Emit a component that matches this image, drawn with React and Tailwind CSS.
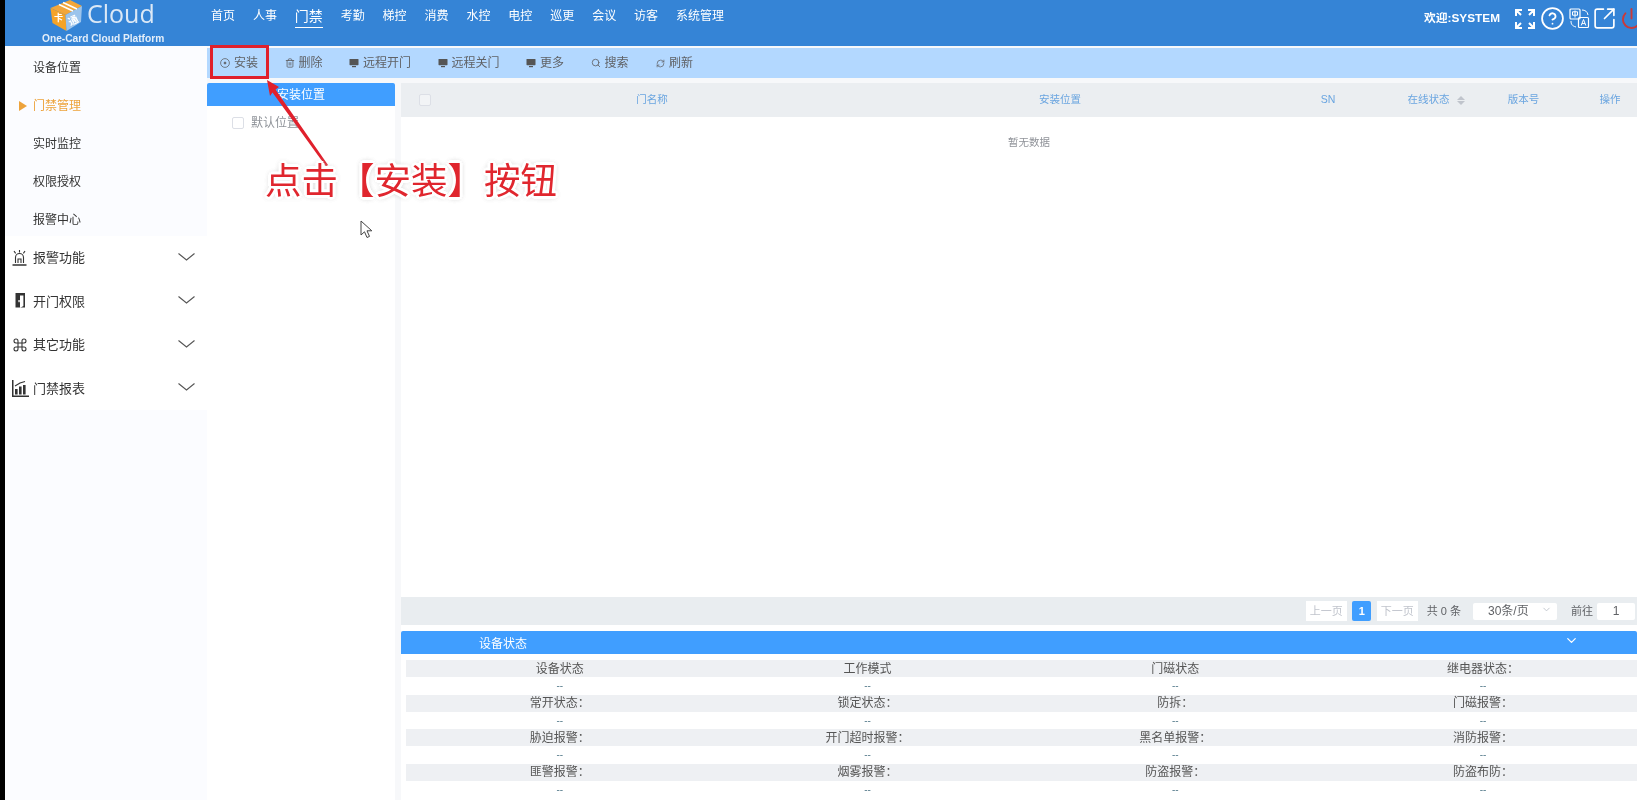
import React from "react";
import { ChevronDown, CircleHelp, Power, SquareArrowOutUpRight, Trash2, Search, RefreshCw, Command } from "lucide-react";

const font = "font-['Liberation_Sans','Noto_Sans_CJK_SC',sans-serif]";
const navItems = ["首页", "人事", "门禁", "考勤", "梯控", "消费", "水控", "电控", "巡更", "会议", "访客", "系统管理"];
const subItems = ["设备位置", "门禁管理", "实时监控", "权限授权", "报警中心"];
const statusRows = [
  ["设备状态", "工作模式", "门磁状态", "继电器状态："],
  ["常开状态：", "锁定状态：", "防拆：", "门磁报警："],
  ["胁迫报警：", "开门超时报警：", "黑名单报警：", "消防报警："],
  ["匪警报警：", "烟雾报警：", "防盗报警：", "防盗布防："],
];

function Logo() {
  return (
    <svg width="32" height="31" viewBox="0 0 32 31" className="shrink-0">
      <path d="M0.5 8 L20 0 L32 6 L15.5 15 Z" fill="#f2a63a" />
      <path d="M0.5 8 L15.5 15 L16.5 31 L2.5 23 Z" fill="#f5a327" />
      <path d="M15.5 15 L32 6 L31 22 L16.5 31 Z" fill="#9cc4ec" />
      <path d="M9 4.5 L23 11 M13 2.5 L27 9" stroke="#fff" strokeWidth="1.6" />
      <text x="4" y="21" fontSize="9" fill="#fff" fontWeight="700" fontFamily="Noto Sans CJK SC, sans-serif">卡</text>
      <text x="18" y="24" fontSize="10" fill="#fff" fontWeight="700" fontFamily="Noto Sans CJK SC, sans-serif" transform="rotate(-25 23 20)">通</text>
    </svg>
  );
}

function FullIcon() {
  return (
    <svg width="20" height="20" viewBox="0 0 20 20" fill="none" stroke="#fff" strokeWidth="2" className="shrink-0">
      <path d="M1 7V1h6M1 1l5 5M13 1h6v6M19 1l-5 5M1 13v6h6M1 19l5-5M19 13v6h-6M19 19l-5-5" />
    </svg>
  );
}

function TransIcon() {
  return (
    <svg width="21" height="21" viewBox="0 0 21 21" fill="none" stroke="#fff" strokeWidth="1.2" className="shrink-0">
      <rect x="1" y="1" width="10" height="10" rx="1" />
      <path d="M3.5 3.8h5v3.4h-5zM6 2.5v7" strokeWidth="1" />
      <rect x="9.5" y="9.5" width="10" height="10" rx="1" />
      <path d="M12.2 17.5l2.3-6 2.3 6M13 15.6h3" strokeWidth="1" />
      <path d="M13 2c3 0 5.5 1.5 6 5M2 13c0 3 1 5 5 6" strokeWidth="1" />
    </svg>
  );
}

function AlarmIcon() {
  return (
    <svg width="15" height="16" viewBox="0 0 15 16" fill="none" stroke="#333" strokeWidth="1.1">
      <path d="M3.5 13V7.5a4 4 0 0 1 8 0V13" />
      <path d="M6 13V9h3v4" />
      <path d="M0.5 15h14" strokeWidth="1.5" />
      <path d="M2 1l1.6 2.4M7.5 0v2.6M13 1l-1.6 2.4" />
    </svg>
  );
}

function DoorIcon() {
  return (
    <svg width="11" height="16" viewBox="0 0 11 16">
      <path d="M0.5 0h9.5v14.5H0.5z" fill="#333" />
      <path d="M5 2.5h3.4V13L5 15z" fill="#fff" />
      <rect x="3.4" y="7" width="1.3" height="2.2" fill="#fff" />
    </svg>
  );
}

function ChartIcon() {
  return (
    <svg width="17" height="17" viewBox="0 0 17 17" fill="#333">
      <path d="M0 0h1.5v15.5H17V17H0z" />
      <rect x="3" y="9" width="2.6" height="5.5" />
      <rect x="7" y="6.5" width="2.6" height="8" />
      <rect x="11" y="5" width="2.6" height="9.5" />
      <path d="M3 6l5-3 5-1.5" stroke="#333" strokeWidth="1.2" fill="none" />
    </svg>
  );
}

function SectionChevron() {
  return (
    <svg width="17" height="8" viewBox="0 0 17 8" fill="none" stroke="#555" strokeWidth="1.1">
      <path d="M0.5 0.5 L8.5 7 L16.5 0.5" />
    </svg>
  );
}

function ToolItem({ icon, label }) {
  return (
    <div className="flex items-center gap-[4px] text-xs text-[#606266]">
      <span className="flex w-[10px] justify-center">{icon}</span>
      <span>{label}</span>
    </div>
  );
}

function CircleDotIcon() {
  return (
    <svg width="10" height="10" viewBox="0 0 10 10" fill="none" stroke="#606266" strokeWidth="0.8">
      <circle cx="5" cy="5" r="4.4" />
      <circle cx="5" cy="5" r="1" fill="#606266" />
    </svg>
  );
}

function ScreenIcon() {
  return (
    <svg width="10" height="10" viewBox="0 0 10 10" fill="#555">
      <rect x="0.5" y="1" width="9" height="6.2" rx="0.6" />
      <rect x="3" y="8" width="4" height="1.2" />
    </svg>
  );
}

export default function App() {
  return (
    <div className={`relative flex h-[800px] w-[1637px] overflow-hidden bg-white blur-[0.4px] ${font}`}>
      <div className="w-[5px] shrink-0 bg-black" />
      <div className="flex min-w-0 flex-1 flex-col">
        <header className="flex h-[46px] shrink-0 items-start bg-[#3584d6] text-white">
          <div className="flex h-[46px] w-[206px] shrink-0 flex-col items-start">
            <div className="ml-[45px] flex h-[32px] items-start gap-[5px]">
              <Logo />
              <span className="font-['Open_Sans',sans-serif] text-[25px] font-normal leading-[27px] text-[#dbe8f6]">Cloud</span>
            </div>
            <span className="ml-[37px] mt-[1px] whitespace-nowrap text-[10.2px] font-bold leading-[12px] text-[#e4eef9]">One-Card Cloud Platform</span>
          </div>
          <nav className="flex h-[32px] items-center gap-[17.9px] text-xs">
            {navItems.map((n) =>
              n === "门禁" ? (
                <span key={n} className="mt-[1px] border-b border-white pb-[1px] text-sm leading-[20px]">{n}</span>
              ) : (
                <span key={n} className="whitespace-nowrap">{n}</span>
              )
            )}
          </nav>
          <div className="ml-auto mr-[-6px] flex h-[37px] items-center">
            <span className="mr-[15px] whitespace-nowrap text-[11.8px] font-bold">欢迎:SYSTEM</span>
            <FullIcon />
            <CircleHelp size={25} strokeWidth={1.7} className="ml-[5px] shrink-0" />
            <span className="ml-[4px]"><TransIcon /></span>
            <SquareArrowOutUpRight size={25} strokeWidth={1.6} className="ml-[2px] shrink-0" />
            <Power size={23} strokeWidth={2} color="#c93a3a" className="ml-[3px] shrink-0" />
          </div>
        </header>

        <div className="flex min-h-0 flex-1">
          <aside className="flex w-[202px] shrink-0 flex-col bg-[#fbfcff]">
            <div className="h-[190px] shrink-0 pt-[3px] text-xs text-[#333]">
              {subItems.map((s) => (
                <div key={s} className={`relative flex h-[38px] items-center pl-[28px] ${s === "门禁管理" ? "text-[#eda33c]" : ""}`}>
                  {s === "门禁管理" && <span className="absolute left-[14px] h-0 w-0 border-y-[5px] border-l-[8px] border-y-transparent border-l-[#eda33c]" />}
                  {s}
                </div>
              ))}
            </div>
            {[
              [<AlarmIcon />, "报警功能", ""],
              [<DoorIcon />, "开门权限", "pl-[3px]"],
              [<Command size={16} strokeWidth={1.6} color="#333" />, "其它功能", ""],
              [<ChartIcon />, "门禁报表", ""],
            ].map(([icon, t, p]) => (
              <div key={t} className="flex h-[43.5px] shrink-0 items-center bg-white pl-[7px] pr-[12px] text-[13px] text-[#333]">
                <span className={`flex w-[21px] shrink-0 justify-start ${p}`}>{icon}</span>
                <span>{t}</span>
                <span className="ml-auto mb-[2px]"><SectionChevron /></span>
              </div>
            ))}
          </aside>

          <main className="flex min-w-0 flex-1 flex-col bg-[#f7f8fa] pt-[2px]">
            <div className="flex h-[30px] shrink-0 items-center gap-[26.5px] bg-[#b3d8ff] pl-[13px]">
              <ToolItem icon={<CircleDotIcon />} label="安装" />
              <ToolItem icon={<Trash2 size={10} color="#606266" />} label="删除" />
              <ToolItem icon={<ScreenIcon />} label="远程开门" />
              <ToolItem icon={<ScreenIcon />} label="远程关门" />
              <ToolItem icon={<ScreenIcon />} label="更多" />
              <ToolItem icon={<Search size={10} color="#606266" />} label="搜索" />
              <ToolItem icon={<RefreshCw size={9} color="#606266" />} label="刷新" />
            </div>

            <div className="flex min-h-0 flex-1 gap-[6px] pt-[5px]">
              <section className="flex w-[188px] shrink-0 flex-col bg-white">
                <div className="flex h-[23px] items-center justify-center rounded-t-[2px] bg-[#409eff] pt-[1px] text-xs text-white">安装位置</div>
                <div className="flex items-center gap-[7px] pl-[25px] pt-[9px] text-xs text-[#8f9399]">
                  <span className="h-[12px] w-[12px] rounded-[2px] border border-[#dcdfe6] bg-white" />
                  默认位置
                </div>
              </section>

              <section className="flex min-w-0 flex-1 flex-col overflow-hidden">
                <div className="flex min-h-0 flex-1 flex-col bg-white">
                  <div className="grid h-[34px] w-[1254px] shrink-0 grid-cols-[67px_368px_448px_88px_110px_83px_90px] items-center bg-[#ebeef1] text-[10.5px] text-[#6aa5e0]">
                    <span className="ml-[18px] h-[12px] w-[12px] rounded-[2px] border border-[#dcdfe6] bg-[#f2f4f6]" />
                    <span className="text-center">门名称</span>
                    <span className="text-center">安装位置</span>
                    <span className="text-center">SN</span>
                    <span className="flex items-center justify-center gap-[7px] pl-[18px]">
                      在线状态
                      <span className="flex flex-col gap-[1px]">
                        <span className="h-0 w-0 border-x-[4px] border-b-[4px] border-x-transparent border-b-[#c0c4cc]" />
                        <span className="h-0 w-0 border-x-[4px] border-t-[4px] border-x-transparent border-t-[#c0c4cc]" />
                      </span>
                    </span>
                    <span className="text-center">版本号</span>
                    <span className="text-center">操作</span>
                  </div>
                  <div className="pb-[13px] pl-[20px] pt-[18px] text-center text-[10.5px] leading-[14px] text-[#909399]">暂无数据</div>
                </div>

                <div className="flex h-[28px] shrink-0 items-center justify-end bg-[#e9edf0] pr-[2px] text-[11px] text-[#606266]">
                  <span className="flex h-[20px] w-[41px] items-center justify-center bg-white text-[#c0c4cc]">上一页</span>
                  <span className="ml-[5.5px] flex h-[20px] w-[19px] items-center justify-center rounded-[2px] bg-[#409eff] font-bold text-white">1</span>
                  <span className="ml-[5.5px] flex h-[20px] w-[41px] items-center justify-center bg-white text-[#c0c4cc]">下一页</span>
                  <span className="ml-[9px] whitespace-nowrap">共 0 条</span>
                  <span className="relative ml-[12px] flex h-[17px] w-[84px] items-center rounded-[2px] bg-white pl-[15px] text-xs">
                    30条/页
                    <ChevronDown size={11} color="#c0c4cc" className="absolute right-[5px] top-[1px]" />
                  </span>
                  <span className="ml-[14px] whitespace-nowrap">前往</span>
                  <span className="ml-[4px] flex h-[17px] w-[38px] items-center justify-center rounded-[2px] bg-white text-xs">1</span>
                </div>

                <div className="h-[6px] shrink-0 bg-white" />

                <div className="shrink-0 bg-white">
                  <div className="flex h-[23px] items-center rounded-t-[2px] bg-[#409eff] pl-[78px] pr-[58px] pt-[2px] text-xs text-white">
                    设备状态
                    <ChevronDown size={15} className="mb-[6px] ml-auto" />
                  </div>
                  <div className="pb-[2px] pl-[5px] pt-[6px]">
                    {statusRows.map((r, i) => (
                      <div key={i}>
                        <div className="grid h-[17px] grid-cols-4 items-center bg-[#eef0f3] text-center text-xs text-[#555]">
                          {r.map((c) => <span key={c}>{c}</span>)}
                        </div>
                        <div className="grid h-[17.5px] grid-cols-4 items-center text-center text-[10px] text-[#5b7f8f]">
                          {r.map((c) => <span key={c}>--</span>)}
                        </div>
                      </div>
                    ))}
                  </div>
                </div>
              </section>
            </div>
          </main>
        </div>
      </div>

      {/* annotation overlay */}
      <div className="absolute left-[210px] top-[45px] h-[34px] w-[59px] border-[3px] border-[#e0202c]" />
      <svg width="90" height="105" viewBox="0 0 90 105" className="absolute left-[262px] top-[75px]">
        <path d="M5 5 L17 12 L13.5 14.5 L66 90 L64 91.5 L10.5 17.5 L8 21 Z" fill="#e0202c" />
      </svg>
      <div className="absolute left-[265px] top-[158px] whitespace-nowrap text-[36.5px] font-normal leading-[48px] text-[#e0262e] [text-shadow:3px_0_0_#fff,-3px_0_0_#fff,0_3px_0_#fff,0_-3px_0_#fff,2px_2px_0_#fff,-2px_2px_0_#fff,2px_-2px_0_#fff,-2px_-2px_0_#fff,0_0_6px_#c8c8c8,0_0_6px_#c8c8c8]">
        点击【安装】按钮
      </div>
      <svg width="14" height="19" viewBox="0 0 14 19" className="absolute left-[360px] top-[220px]">
        <path d="M1 1 V15 L4.5 11.8 L7 17.5 L9.5 16.4 L7 10.8 H11.8 Z" fill="#fff" stroke="#444" strokeWidth="1" strokeLinejoin="round" />
      </svg>
    </div>
  );
}
